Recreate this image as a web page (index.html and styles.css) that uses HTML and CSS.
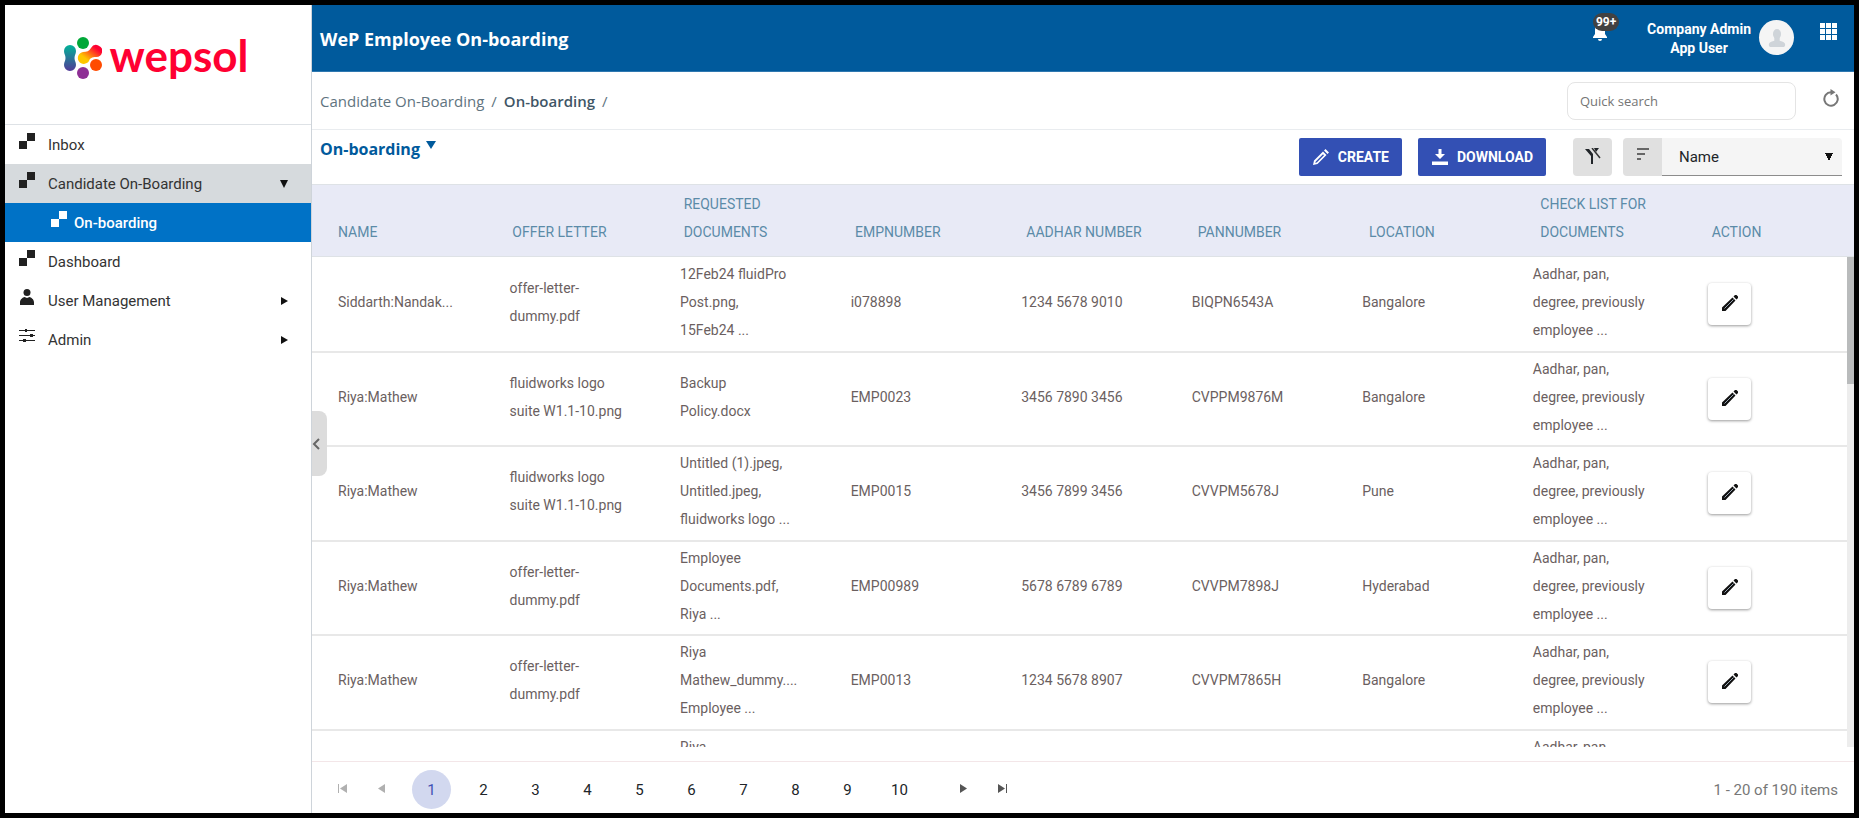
FILE: index.html
```
<!DOCTYPE html>
<html lang="en">
<head>
  <meta charset="UTF-8" />
  <meta name="viewport" content="width=device-width, initial-scale=1.0"/>
  <title>WeP Employee On-boarding</title>
  <link rel="stylesheet" href="styles.css">
</head>
<body>

  <!-- shared icons -->
  <svg class="sprite" aria-hidden="true">
    <symbol id="icon-blocks" viewBox="0 0 16 16">
      <path d="M8 0h8v8H8zM0 8h8v8H0z"/>
    </symbol>
    <symbol id="icon-pencil" viewBox="0 0 16 16">
      <path fill-rule="evenodd" d="M0 16l1-4.500 9-9 3.500 3.500-9 9zM2.200 13.800l1.600-.4 7.200-7.200-1-1-7.200 7.200zM11 1.500L12.500 0 16 3.500 14.500 5z"/>
    </symbol>
    <symbol id="icon-edit" viewBox="0 0 16 16">
      <path d="M0 16v-3.500L10.500 2.500l3 3L3.500 16zM11.500 1.500L13 0h1.500L16 1.500V3l-1.500 1.500z"/>
      <path d="M2.500 13.500L11.500 4.500" stroke="#9aa7b4" stroke-width="1"/>
    </symbol>
  </svg>

  <div class="app">

    <aside class="sidebar">
      <div class="logo">
        <svg class="logo-mark" viewBox="0 0 38 42" aria-hidden="true">
          <defs>
            <linearGradient id="teal" x1="0" y1="0" x2="0" y2="1">
              <stop offset="0" stop-color="#00b398"/>
              <stop offset="1" stop-color="#523a98"/>
            </linearGradient>
            <linearGradient id="warm" x1="0" y1="1" x2="1" y2="0">
              <stop offset="0.300" stop-color="#ffc600"/>
              <stop offset="0.800" stop-color="#ff0032"/>
            </linearGradient>
          </defs>
          <circle cx="19" cy="6" r="6" fill="#00a838"/>
          <path d="M0 14a6 6 0 0 1 12 0c0 3-1.500 4-1.500 7s1.500 4 1.500 7a6 6 0 0 1-12 0c0-3 1.500-4 1.500-7S0 17 0 14z" fill="url(#teal)"/>
          <path d="M19 15c4 0 6-1 8-4a6 6 0 1 1 5 9c-4 0-6 1-7 4a6 6 0 1 1-6-9z" fill="url(#warm)"/>
          <circle cx="32" cy="28" r="6" fill="#ff4b00"/>
          <circle cx="19" cy="36" r="6" fill="#8e2f95"/>
        </svg>
        <span class="logo-text">wepsol</span>
      </div>

      <nav class="menu">
        <a href="#" class="menu-item">
          <svg class="menu-icon"><use href="#icon-blocks"/></svg>
          <span>Inbox</span>
        </a>
        <a href="#" class="menu-item open">
          <svg class="menu-icon"><use href="#icon-blocks"/></svg>
          <span>Candidate On-Boarding</span>
          <svg class="menu-arrow" viewBox="0 0 8 8"><path d="M0 0h8L4 8z"/></svg>
        </a>
        <a href="#" class="menu-item sub active">
          <svg class="menu-icon"><use href="#icon-blocks"/></svg>
          <span>On-boarding</span>
        </a>
        <a href="#" class="menu-item">
          <svg class="menu-icon"><use href="#icon-blocks"/></svg>
          <span>Dashboard</span>
        </a>
        <a href="#" class="menu-item">
          <svg class="menu-icon" viewBox="0 0 16 16"><circle cx="8" cy="3.500" r="3.500"/><path d="M1 16v-2.500C1 10 4 8.500 5.500 8L8 9l2.500-1c1.500.5 4.500 2 4.500 5.500V16z"/></svg>
          <span>User Management</span>
          <svg class="menu-arrow" viewBox="0 0 8 8"><path d="M1 0v8l7-4z"/></svg>
        </a>
        <a href="#" class="menu-item">
          <svg class="menu-icon" viewBox="0 0 16 16"><path d="M0 2h16v1H0zM0 7h16v1H0zM0 12h16v1H0zM6 1h2v3H6zM11 6h3v3h-3zM4 11h3v3H4z"/></svg>
          <span>Admin</span>
          <svg class="menu-arrow" viewBox="0 0 8 8"><path d="M1 0v8l7-4z"/></svg>
        </a>
      </nav>
    </aside>

    <main class="content">
      <button class="collapse" aria-label="Collapse menu">
        <svg viewBox="0 0 8 12"><path d="M7 1L2 6l5 5" fill="none" stroke="#666" stroke-width="2"/></svg>
      </button>

      <header class="topbar">
        <h1>WeP Employee On-boarding</h1>
        <button class="bell" aria-label="Notifications">
          <svg viewBox="0 0 14 16"><path d="M7 0c3 0 5 2 5 5v4l2 3v1H0v-1l2-3V5c0-3 2-5 5-5zM5 14h4a2 2 0 0 1-4 0z"/></svg>
          <span class="badge">99+</span>
        </button>
        <div class="user">Company Admin<br>App User</div>
        <div class="avatar">
          <svg viewBox="0 0 18 20"><ellipse cx="9" cy="5.500" rx="4.500" ry="5.500"/><path d="M6 9h6v4c4 1 6 2 6 4v1c0 1-1 2-2 2H2c-1 0-2-1-2-2v-1c0-2 2-3 6-4z"/></svg>
        </div>
        <button class="apps" aria-label="Apps">
          <svg viewBox="0 0 17 17"><path d="M0 0h5v5H0zM6 0h5v5H6zM12 0h5v5h-5zM0 6h5v5H0zM6 6h5v5H6zM12 6h5v5h-5zM0 12h5v5H0zM6 12h5v5H6zM12 12h5v5h-5z"/></svg>
        </button>
      </header>

      <div class="crumbs">
        <nav class="path">
          <a href="#">Candidate On-Boarding</a>
          <span>/</span>
          <a href="#" class="current">On-boarding</a>
          <span>/</span>
        </nav>
        <input type="search" class="search" placeholder="Quick search" aria-label="Quick search">
        <button class="refresh" aria-label="Refresh">
          <svg viewBox="0 0 16 18"><path d="M13 5.500A6.700 6.700 0 1 1 8 3.300" fill="none" stroke="#777" stroke-width="2"/><path d="M7.500 0l5 3.300-5 3.200z" fill="#777"/></svg>
        </button>
      </div>

      <div class="toolbar">
        <h2>On-boarding</h2>
        <button class="view-menu" aria-label="Change view">
          <svg viewBox="0 0 10 8"><path d="M0 0h10L5 8z"/></svg>
        </button>
        <div class="tools">
          <button class="btn">
            <svg><use href="#icon-pencil"/></svg>
            CREATE
          </button>
          <button class="btn">
            <svg viewBox="0 0 16 16"><path d="M6.500 0h3v5H13l-5 5-5-5h3.500zM0 12.500h16V16H0z"/></svg>
            DOWNLOAD
          </button>
          <button class="btn-grey filter" aria-label="Clear filter">
            <svg viewBox="0 0 16 16"><path d="M0 1h4l4 5v10H6V8zM9 0h5l-3 4z"/><path d="M7 0l8 10" fill="none" stroke="#333" stroke-width="1.500"/></svg>
          </button>
          <div class="sort">
            <button class="btn-grey" aria-label="Sort order">
              <svg viewBox="0 0 12 12"><path d="M0 0h12v2H0zM0 5h8v2H0zM0 10h4v2H0z"/></svg>
            </button>
            <select aria-label="Sort by">
              <option>Name</option>
            </select>
          </div>
        </div>
      </div>

      <div class="grid-head">
        <table>
          <thead>
            <tr>
              <th>NAME</th>
              <th>OFFER LETTER</th>
              <th>REQUESTED DOCUMENTS</th>
              <th>EMPNUMBER</th>
              <th>AADHAR NUMBER</th>
              <th>PANNUMBER</th>
              <th>LOCATION</th>
              <th>CHECK LIST FOR DOCUMENTS</th>
              <th>ACTION</th>
            </tr>
          </thead>
        </table>
      </div>

      <div class="grid-body">
        <div class="grid-rows">
          <table>
            <tbody>
              <tr>
                <td>Siddarth:Nandak...</td>
                <td>offer-letter-dummy.pdf</td>
                <td>12Feb24 fluidPro<br>Post.png,<br>15Feb24 ...</td>
                <td>i078898</td>
                <td>1234 5678 9010</td>
                <td>BIQPN6543A</td>
                <td>Bangalore</td>
                <td>Aadhar, pan, degree, previously employee ...</td>
                <td><button class="edit" aria-label="Edit"><svg><use href="#icon-edit"/></svg></button></td>
              </tr>
              <tr>
                <td>Riya:Mathew</td>
                <td>fluidworks logo suite W1.1-10.png</td>
                <td>Backup<br>Policy.docx</td>
                <td>EMP0023</td>
                <td>3456 7890 3456</td>
                <td>CVPPM9876M</td>
                <td>Bangalore</td>
                <td>Aadhar, pan, degree, previously employee ...</td>
                <td><button class="edit" aria-label="Edit"><svg><use href="#icon-edit"/></svg></button></td>
              </tr>
              <tr>
                <td>Riya:Mathew</td>
                <td>fluidworks logo suite W1.1-10.png</td>
                <td>Untitled (1).jpeg,<br>Untitled.jpeg,<br>fluidworks logo ...</td>
                <td>EMP0015</td>
                <td>3456 7899 3456</td>
                <td>CVVPM5678J</td>
                <td>Pune</td>
                <td>Aadhar, pan, degree, previously employee ...</td>
                <td><button class="edit" aria-label="Edit"><svg><use href="#icon-edit"/></svg></button></td>
              </tr>
              <tr>
                <td>Riya:Mathew</td>
                <td>offer-letter-dummy.pdf</td>
                <td>Employee<br>Documents.pdf,<br>Riya ...</td>
                <td>EMP00989</td>
                <td>5678 6789 6789</td>
                <td>CVVPM7898J</td>
                <td>Hyderabad</td>
                <td>Aadhar, pan, degree, previously employee ...</td>
                <td><button class="edit" aria-label="Edit"><svg><use href="#icon-edit"/></svg></button></td>
              </tr>
              <tr>
                <td>Riya:Mathew</td>
                <td>offer-letter-dummy.pdf</td>
                <td>Riya<br>Mathew_dummy....<br>Employee ...</td>
                <td>EMP0013</td>
                <td>1234 5678 8907</td>
                <td>CVVPM7865H</td>
                <td>Bangalore</td>
                <td>Aadhar, pan, degree, previously employee ...</td>
                <td><button class="edit" aria-label="Edit"><svg><use href="#icon-edit"/></svg></button></td>
              </tr>
              <tr>
                <td></td>
                <td></td>
                <td>Riya<br><br><br></td>
                <td></td>
                <td></td>
                <td></td>
                <td></td>
                <td>Aadhar, pan,<br><br><br></td>
                <td></td>
              </tr>
            </tbody>
          </table>
        </div>
        <div class="scrollbar"><div class="thumb"></div></div>
      </div>

      <footer class="pager">
        <button class="nav-btn off" aria-label="First page"><svg viewBox="0 0 9 9"><path d="M0 0h1v9H0zM9 0v9L2 4.500z"/></svg></button>
        <button class="nav-btn off" aria-label="Previous page"><svg viewBox="0 0 9 9"><path d="M8 0v9L1 4.500z"/></svg></button>
        <div class="pages">
          <button class="page current">1</button>
          <button class="page">2</button>
          <button class="page">3</button>
          <button class="page">4</button>
          <button class="page">5</button>
          <button class="page">6</button>
          <button class="page">7</button>
          <button class="page">8</button>
          <button class="page">9</button>
          <button class="page">10</button>
        </div>
        <button class="nav-btn" aria-label="Next page"><svg viewBox="0 0 9 9"><path d="M1 0v9l7-4.500z"/></svg></button>
        <button class="nav-btn" aria-label="Last page"><svg viewBox="0 0 9 9"><path d="M8 0h1v9H8zM0 0v9l7-4.500z"/></svg></button>
        <span class="count">1 - 20 of 190 items</span>
      </footer>
    </main>

  </div>

</body>
</html>
```

FILE: styles.css
```
* {
  box-sizing: border-box;
}

body {
  margin: 0;
  font-family: Roboto, Arial, sans-serif;
  font-size: 14px;
  color: #212529;
}

a {
  color: inherit;
  text-decoration: none;
}

button {
  padding: 0;
  border: none;
  background: none;
  font-family: inherit;
  color: inherit;
}

svg {
  display: block;
  fill: currentColor;
}

.sprite {
  display: none;
}

.app {
  display: flex;
  height: 100vh;
  border: 5px solid #000;
  background-color: #fff;
}

/* sidebar */
.sidebar {
  flex: none;
  width: 307px;
  border-right: 1px solid #ced4da;
}

.logo {
  display: flex;
  justify-content: center;
  gap: 8px;
  height: 120px;
  padding: 32px 4px 0 0;
  border-bottom: 1px solid #dee2e6;
}

.logo-mark {
  width: 38px;
  height: 42px;
}

.logo-text {
  font-family: Lato, sans-serif;
  font-size: 44px;
  font-weight: bold;
  line-height: 36px;
  color: #ff0032;
}

.menu-item {
  display: flex;
  align-items: center;
  height: 39px;
  padding: 0 23px 0 14px;
  font-size: 15px;
  color: #333;
}

.menu-icon {
  width: 16px;
  height: 16px;
  margin-right: 13px;
  margin-bottom: 7px;
  color: #212121;
}

.menu-arrow {
  width: 8px;
  height: 8px;
  margin-left: auto;
  color: #111;
}

.menu-item.open {
  background-color: #d6dadd;
}

.menu-item.sub {
  padding-left: 46px;
  font-weight: 500;
}

.menu-item.sub .menu-icon {
  margin-right: 7px;
}

.menu-item.active,
.menu-item.active .menu-icon {
  background-color: #0072c6;
  color: #fff;
}

/* main area */
.content {
  position: relative;
  flex: 1;
  min-width: 0;
  display: flex;
  flex-direction: column;
}

.collapse {
  position: absolute;
  left: 0;
  top: 406px;
  width: 15px;
  height: 65px;
  border-radius: 0 8px 8px 0;
  background-color: #dcdcdc;
}

.collapse svg {
  width: 8px;
  height: 14px;
}

.topbar {
  display: flex;
  flex: none;
  height: 67px;
  padding: 0 17px 0 8px;
  background-color: #005a9c;
  border-bottom: 1px solid #2f78b0;
  color: #fff;
}

.topbar h1 {
  margin: 0 auto 0 0;
  font-family: "Open Sans", sans-serif;
  font-size: 18px;
  font-weight: bold;
  line-height: 68px;
}

.bell {
  position: relative;
  align-self: flex-start;
  margin: 20px 40px 0 0;
}

.bell svg {
  width: 14px;
  height: 16px;
}

.badge {
  position: absolute;
  left: 0;
  top: -12px;
  width: 26px;
  height: 18px;
  border-radius: 9px;
  background-color: #424242;
  font-size: 12px;
  font-weight: bold;
  line-height: 18px;
}

.user {
  margin-right: 8px;
  padding-top: 15px;
  font-size: 14px;
  font-weight: bold;
  line-height: 19px;
  text-align: center;
}

.avatar {
  display: flex;
  align-items: center;
  justify-content: center;
  width: 35px;
  height: 35px;
  margin: 15px 26px 0 0;
  border-radius: 50%;
  background-color: #f5f5f5;
  color: #cfd4d9;
}

.avatar svg {
  width: 18px;
  height: 18px;
}

.apps {
  align-self: flex-start;
  margin-top: 18px;
}

.apps svg {
  width: 17px;
  height: 17px;
}

.crumbs {
  display: flex;
  align-items: center;
  flex: none;
  height: 58px;
  padding: 0 15px 0 8px;
  border-bottom: 1px solid #e9ecef;
}

.path {
  display: flex;
  gap: 7px;
  margin-right: auto;
  font-family: "Open Sans", sans-serif;
  font-size: 15px;
  color: #5f7480;
}

.path .current {
  font-weight: 600;
  color: #3f5666;
}

.search {
  width: 229px;
  height: 38px;
  margin-right: 27px;
  padding: 1px 12px 0;
  border: 1px solid #e4e4e4;
  border-radius: 8px;
  font-family: "Open Sans", sans-serif;
  font-size: 13px;
}

.search::placeholder {
  color: #757575;
}

.refresh svg {
  width: 16px;
  height: 18px;
  margin-bottom: 6px;
}

.toolbar {
  display: flex;
  flex: none;
  height: 55px;
  padding: 8px 12px 0 8px;
  border-bottom: 1px solid #dee2e6;
}

.toolbar h2 {
  margin: 0;
  font-family: "Open Sans", sans-serif;
  font-size: 16px;
  font-weight: bold;
  line-height: 22px;
  color: #005a9c;
}

.view-menu {
  align-self: flex-start;
  margin: 3px 0 0 6px;
  color: #005a9c;
}

.view-menu svg {
  width: 10px;
  height: 8px;
}

.tools {
  display: flex;
  margin-left: auto;
}

.btn {
  display: flex;
  align-items: center;
  gap: 9px;
  height: 38px;
  margin-right: 16px;
  padding: 0 13px 0 14px;
  border-radius: 2px;
  background-color: #3350b4;
  font-size: 14px;
  font-weight: bold;
  color: #fff;
}

.btn svg {
  width: 16px;
  height: 16px;
}

.btn-grey {
  display: flex;
  justify-content: center;
  width: 39px;
  height: 38px;
  padding-top: 10px;
  border-radius: 4px;
  background-color: #e0e0e0;
}

.btn-grey svg {
  width: 16px;
  height: 16px;
}

.filter {
  margin: 0 11px;
}

.sort {
  display: flex;
}

.sort .btn-grey {
  border-radius: 4px 0 0 4px;
  color: #666;
}

.sort svg {
  width: 12px;
  height: 12px;
}

.sort select {
  appearance: none;
  width: 180px;
  height: 38px;
  padding: 1px 17px 0;
  border: none;
  border-bottom: 1px solid #8c8c8c;
  border-radius: 0 4px 0 0;
  background: #f5f5f5 conic-gradient(from -27deg at 50% 100%, #111 54deg, transparent 0) no-repeat right 9px center / 8px 8px;
  font-family: inherit;
  font-size: 15px;
  color: #212529;
}

/* grid */
table {
  width: 100%;
  table-layout: fixed;
  border-collapse: collapse;
}

th,
td {
  text-align: left;
  line-height: 28px;
}

.grid-head {
  flex: none;
  background-color: #e8eaf6;
  border-bottom: 1px solid #dee2e6;
}

th {
  height: 71px;
  padding: 4px 20px 10px 29px;
  vertical-align: bottom;
  font-weight: normal;
  color: #5b8ba8;
}

.grid-body {
  display: flex;
  flex: 1;
  min-height: 0;
  margin-bottom: 14px;
}

.grid-rows {
  flex: 1;
  overflow: hidden;
}

.grid-rows table {
  height: 568px;
}

td {
  height: 94px;
  padding: 0 26px 4px 27px;
  border-bottom: 2px solid #e8e8e8;
  color: #6b5f5f;
}

th:first-child,
td:first-child {
  padding-left: 26px;
}

.edit {
  display: flex;
  align-items: center;
  justify-content: center;
  width: 43px;
  height: 42px;
  margin: 4px 0 0 5px;
  border-radius: 4px;
  background-color: #fff;
  box-shadow: 0 1px 3px rgba(0, 0, 0, 0.4);
  color: #111;
}

.edit svg {
  width: 16px;
  height: 16px;
  margin-bottom: 2px;
}

.scrollbar {
  width: 7px;
  background-color: #ededed;
}

.thumb {
  height: 26%;
  background-color: #b9bbbc;
}

/* pager */
.pager {
  display: flex;
  align-items: center;
  flex: none;
  height: 52px;
  padding: 0 16px 0 11px;
  border-top: 1px solid #f3e6e8;
}

.nav-btn {
  display: flex;
  align-items: center;
  justify-content: center;
  width: 39px;
  height: 39px;
  margin-top: 2px;
  color: #555;
}

.nav-btn svg {
  width: 9px;
  height: 9px;
}

.nav-btn.off {
  color: #b0b0b0;
}

.pages {
  display: flex;
  gap: 13px;
  margin: 4px 25px 0 11px;
}

.page {
  width: 39px;
  height: 39px;
  border-radius: 50%;
  font-size: 15px;
  color: #212529;
}

.page.current {
  background-color: #d2d8ef;
  color: #3f51b5;
}

.count {
  margin: 4px 0 0 auto;
  font-size: 15px;
  color: #777;
}
```
